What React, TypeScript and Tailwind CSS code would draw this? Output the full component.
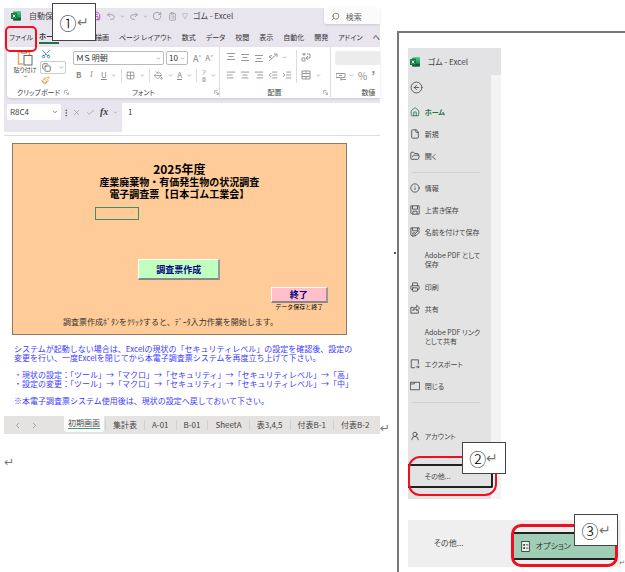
import type { ReactNode } from 'react';
import {
  AlignCenter,
  AlignLeft,
  AlignRight,
  Check,
  ChevronDown,
  ChevronLeft,
  ChevronRight,
  CircleArrowLeft,
  ClipboardList,
  Copy,
  File,
  FolderOpen,
  Grid2x2,
  House,
  Info,
  IndentDecrease,
  IndentIncrease,
  Paintbrush,
  PaintBucket,
  Printer,
  Redo2,
  RotateCw,
  Save,
  Scissors,
  Search,
  Undo2,
  UserRound,
  X,
} from 'lucide-react';

const ribbonTabs = ['描画', 'ページ レイアウト', '数式', 'データ', '校閲', '表示', '自動化', '開発', 'アドイン', 'ヘ'];
const sheets = ['集計表', 'A-01', 'B-01', 'SheetA', '表3,4,5', '付表B-1', '付表B-2'];

const ExcelLogo = () => (
  <svg viewBox="0 0 20 20" className="size-[10px] shrink-0">
    <rect x="4" y="1" width="16" height="18" rx="1.500" fill="#21a366" />
    <path d="M12 1h6.500a1.500 1.500 0 0 1 1.500 1.500V7h-8z" fill="#33c481" />
    <path d="M4 13h16v4.500a1.500 1.500 0 0 1-1.500 1.500h-13A1.500 1.500 0 0 1 4 17.500z" fill="#185c37" />
    <rect x="0" y="4" width="12" height="12" rx="1.200" fill="#107c41" />
    <path d="M3.500 7l5 6M8.500 7l-5 6" stroke="#fff" strokeWidth="1.800" />
  </svg>
);

const PasteIcon = () => (
  <svg viewBox="0 0 16 17" className="h-[17px] w-[16px]" fill="none">
    <path d="M6 15H1.500V3H4M10 3h2.500v3" stroke="#f0a35a" strokeWidth="1.500" />
    <path d="M4.500 4V2H6l1-1 1 1h1.500v2z" stroke="#777" fill="#eee" />
    <rect x="7" y="6.500" width="8" height="9.500" fill="#fff" stroke="#666" />
  </svg>
);

const MenuIcon = ({ d }: { d: string }) => (
  <svg viewBox="0 0 24 24" className="size-[10px]" fill="none" stroke="currentColor" strokeWidth="2">
    <path d={d} />
  </svg>
);

const OptionsIcon = () => (
  <svg viewBox="0 0 16 20" className="h-[11px] w-[9px] shrink-0" fill="none" stroke="#333" strokeWidth="1.500">
    <rect x="1" y="1" width="14" height="18" fill="#e9f2ed" />
    <path d="M9 7h4M9 13h4" />
    <path d="M4 7h3M4 13h3" strokeWidth="3" />
  </svg>
);

const LinesIcon = ({ d }: { d: string }) => (
  <svg viewBox="0 0 10 10" className="size-[10px]" fill="none" stroke="#999">
    <path d={d} />
  </svg>
);

const Launcher = () => (
  <svg viewBox="0 0 8 8" className="size-[5px]" fill="none" stroke="#888">
    <path d="M1 6V1h5M3 3l4 4M7 4v3H4" />
  </svg>
);

const Chevron = () => <ChevronDown className="size-[5px] shrink-0" strokeWidth={3} />;

const Divider = () => <span className="h-[13px] w-px bg-[#dcdcdc]" />;

const ReturnMark = ({ className = '' }: { className?: string }) => (
  <span className={`font-['DejaVu_Sans',sans-serif] text-[#777] ${className}`}>↵</span>
);

const Callout = ({ mark, className }: { mark: string; className: string }) => (
  <div className={`absolute z-10 flex items-center justify-center border border-[#444] bg-white text-[17px] leading-none font-light text-black ${className}`}>
    {mark}
    <ReturnMark className="text-[14px]" />
  </div>
);

const GroupLabel = ({ children, launcher = true }: { children: ReactNode; launcher?: boolean }) => (
  <div className="mt-auto flex h-[10px] items-center text-[7px] leading-none text-[#444]">
    <span className="flex-1 text-center">{children}</span>
    {launcher && <Launcher />}
  </div>
);

const TitleBar = () => (
  <div className="flex h-[16px] items-center pl-[7px] text-[#999]">
    <ExcelLogo />
    <span className="ml-[8px] w-[62px] text-[8px] leading-none text-[#444]">自動保存</span>
    <Save className="size-[10px] text-[#a03cb4]" />
    <div className="ml-[5px] flex items-center gap-[4px]">
      <Undo2 className="size-[10px]" />
      <Chevron />
      <Redo2 className="size-[10px]" />
      <Chevron />
      <RotateCw className="size-[10px]" />
      <ClipboardList className="ml-[2px] size-[9px]" />
      <span className="ml-px text-[6px] leading-none text-[#555]">▽</span>
    </div>
    <span className="ml-[5px] text-[8px] leading-none whitespace-nowrap text-[#444]">ゴム - Excel</span>
    <label className="ml-auto flex h-full w-[56px] items-center gap-[6px] rounded-bl-[2px] bg-[#fbfbfc] pl-[7px] shadow-sm">
      <Search className="size-[9px] shrink-0 -scale-x-100 text-[#666]" />
      <input aria-label="検索" placeholder="検索" className="w-[28px] text-[8px] leading-none outline-none placeholder:text-[#666]" />
    </label>
  </div>
);

const RibbonTabs = () => (
  <nav className="flex h-[23px] items-center pt-[3px] pl-[5px] text-[7px] leading-none whitespace-nowrap text-[#333]">
    <button className="w-[22px] text-left">ファイル</button>
    <button className="ml-[8px] h-[13px] w-[20px] border-b-2 border-[#217346] text-left font-bold">ホーム</button>
    <button className="w-[36px] text-center">挿入</button>
    <div className="flex flex-1 justify-between">
      {ribbonTabs.map((tab) => (
        <button key={tab}>{tab}</button>
      ))}
    </div>
  </nav>
);

const Ribbon = () => (
  <div className="ml-[3px] flex h-[51px] overflow-hidden rounded-l-[4px] bg-white pb-px text-[#888] shadow-sm">
    <div className="flex w-[62px] shrink-0 flex-col pl-[6px]">
      <div className="flex gap-[3px] pt-[2px]">
        <button className="flex w-[24px] flex-col items-center text-[6px] leading-[8px] whitespace-nowrap text-[#444]">
          <PasteIcon />
          貼り付け
          <Chevron />
        </button>
        <div className="flex w-[26px] flex-col gap-[2px]">
          <Scissors className="ml-px size-[10px] -rotate-90 text-[#3b7fb5]" />
          <button aria-label="コピー" className="flex h-[13px] items-center justify-between rounded-[2px] border border-[#ccc] px-px">
            <Copy className="size-[9px] text-[#555]" />
            <Chevron />
          </button>
          <Paintbrush className="ml-px size-[9px] text-[#e08a2c]" />
        </div>
      </div>
      <GroupLabel>クリップボード</GroupLabel>
    </div>
    <div className="ml-[4px] flex w-[146px] shrink-0 flex-col">
      <div className="flex items-center gap-[2px] pt-[4px]">
        <div className="flex h-[14px] w-[91px] items-center rounded-[2px] border border-[#bbb] px-[2px]">
          <select aria-label="フォント" className="min-w-0 flex-1 appearance-none text-[8px] leading-none text-[#333]">
            <option>ＭＳ 明朝</option>
          </select>
          <Chevron />
        </div>
        <div className="flex h-[14px] w-[22px] items-center rounded-[2px] border border-[#bbb] px-[2px]">
          <select aria-label="フォント サイズ" className="min-w-0 flex-1 appearance-none text-[8px] leading-none text-[#333]">
            <option>10</option>
          </select>
          <Chevron />
        </div>
        <span className="ml-[3px] text-[9px] leading-none">A<sup className="text-[5px]">^</sup></span>
        <span className="ml-[2px] text-[8px] leading-none">A<sup className="text-[5px]">ˇ</sup></span>
      </div>
      <div className="mt-[3px] flex h-[14px] items-center justify-between pr-[3px] pl-[3px] text-[8px] leading-none">
        <button className="font-bold">B</button>
        <button className="px-[4px] font-['Liberation_Serif',serif] italic">I</button>
        <button className="underline">U</button>
        <Chevron />
        <Divider />
        <Grid2x2 className="size-[9px]" />
        <Chevron />
        <Divider />
        <PaintBucket className="size-[9px]" />
        <Chevron />
        <button className="border-b border-[#888]">A</button>
        <Chevron />
        <Divider />
        <button className="text-[5px] leading-[7px]">ア<br />亜</button>
        <Chevron />
      </div>
      <GroupLabel>フォント</GroupLabel>
    </div>
    <span className="mr-[6px] h-full w-px shrink-0 bg-[#ddd]" />
    <div className="flex w-[102px] shrink-0 flex-col">
      <div className="flex flex-1">
        <div className="flex w-[70px] flex-col gap-[8px] pt-[5px]">
          <div className="flex items-center gap-[4px]">
            <LinesIcon d="M1 1.500h8M2.500 4.500h5M1 7.500h8" />
            <LinesIcon d="M1 2.500h8M2.500 5.500h5M1 8.500h8" />
            <LinesIcon d="M1 3.500h8M2.500 6.500h5M1 9.500h8" />
            <LinesIcon d="M1 9l8-7M6 2h3v3M1 4l3 3M2 6a1 1 0 1 1 2-2" />
            <Chevron />
          </div>
          <div className="flex items-center gap-[4px]">
            <AlignLeft className="size-[10px]" />
            <AlignCenter className="size-[10px]" />
            <AlignRight className="size-[10px]" />
            <IndentDecrease className="size-[10px]" />
            <IndentIncrease className="size-[10px]" />
          </div>
        </div>
        <span className="mt-[3px] h-[33px] w-px bg-[#ddd]" />
        <div className="flex flex-col gap-[8px] pt-[5px] pl-[4px]">
          <LinesIcon d="M1 2h4M3 1v3M6 2h3v4H6M1 6h3v3H1zM7 8l-2-2 2-2" />
          <div className="flex items-center gap-[5px]">
            <LinesIcon d="M1 1h8v8H1zM1 3.500h8M1 6.500h8M5 1v2.500M5 6.500V9" />
            <Chevron />
          </div>
        </div>
      </div>
      <GroupLabel>配置</GroupLabel>
    </div>
    <span className="mr-[4px] ml-[2px] h-full w-px shrink-0 bg-[#ddd]" />
    <div className="flex min-w-0 flex-1 flex-col pt-[4px]">
      <select aria-label="表示形式" className="h-[14px] w-full appearance-none rounded-l-[3px] bg-[#ececec]" />
      <div className="mt-[4px] flex h-[13px] items-center gap-[3px] pl-px leading-none">
        <LinesIcon d="M0 2.500h9v4H0zM3 4.500h3M5 8.500h5M5 6.500v3" />
        <Chevron />
        <span className="ml-px text-[10px]">%</span>
        <span className="ml-px text-[12px] font-bold">’</span>
      </div>
      <div className="mt-auto flex flex-col pl-[22px]">
        <GroupLabel launcher={false}>数値</GroupLabel>
      </div>
    </div>
  </div>
);

const FormulaBar = () => (
  <div className="mt-[5px] flex h-[29px] items-start pl-[3px] text-[#999]">
    <div className="mt-px flex h-[16px] w-[54px] items-center rounded-[2px] bg-white px-[3px]">
      <select aria-label="名前ボックス" className="min-w-0 flex-1 appearance-none text-[8px] leading-none text-[#444]">
        <option>R8C4</option>
      </select>
      <ChevronDown className="size-[6px] text-[#555]" strokeWidth={3} />
    </div>
    <div className="mt-px flex h-[16px] w-[61px] items-center gap-[5px] pl-[4px]">
      <span className="text-[9px] leading-none font-bold text-[#555]">⁝</span>
      <X className="size-[9px]" />
      <Check className="size-[9px]" />
      <span className="font-['Liberation_Serif',serif] text-[10px] leading-none font-bold text-[#444] italic">fx</span>
      <Chevron />
    </div>
    <input aria-label="数式バー" defaultValue="1" className="h-full min-w-0 flex-1 bg-white pb-[12px] pl-[6px] text-[8px] text-[#444] outline-none" />
  </div>
);

const bevel = 'border-t border-l border-r-2 border-b-2 border-t-white border-l-white border-r-[#999] border-b-[#888] font-bold text-[#000080]';

const StartForm = () => (
  <div className="mt-[7px] mr-[33px] ml-[8px] flex flex-col border border-[#8c7a66] bg-[#ffcc99] pb-[6px] text-black">
    <h1 className="pt-[19px] text-center text-[10px] leading-[12px] font-bold whitespace-nowrap">
      <span className="text-[12px]">2025年度</span>
      <br />
      産業廃棄物・有価発生物の状況調査
      <br />
      電子調査票【日本ゴム工業会】
    </h1>
    <div className="mt-[7px] ml-[82px] h-[13px] w-[44px] border border-[#3f8f5f]" />
    <button className={`mt-[39px] h-[21px] w-[82px] self-center bg-[#c0ffc0] text-[9px] leading-none ${bevel}`}>調査票作成</button>
    <div className="mt-[7px] mr-[18px] flex w-[57px] flex-col items-center self-end">
      <button className={`h-[16px] w-full bg-[#ffc0cb] text-[9px] leading-none ${bevel}`}>終了</button>
      <span className="text-[6px] leading-[8px] whitespace-nowrap">データ保存と終了</span>
    </div>
    <p className="mt-[5px] pl-[50px] text-[8px] leading-[12px] whitespace-nowrap text-[#333]">
      調査票作成ﾎﾞﾀﾝをｸﾘｯｸすると、ﾃﾞｰﾀ入力作業を開始します。
    </p>
  </div>
);

const Notes = () => (
  <div className="mt-[9px] ml-[10px] text-[8px] leading-[9px] whitespace-nowrap text-[#3c3cff]">
    <p>
      システムが起動しない場合は、Excelの現状の「セキュリティレベル」の設定を確認後、設定の
      <br />
      変更を行い、一度Excelを閉じてから本電子調査票システムを再度立ち上げて下さい。
    </p>
    <ul className="my-[8px]">
      <li>・現状の設定：「ツール」→「マクロ」→「セキュリティ」→「セキュリティレベル」→「高」</li>
      <li>・設定の変更：「ツール」→「マクロ」→「セキュリティ」→「セキュリティレベル」→「中」</li>
    </ul>
    <p>※本電子調査票システム使用後は、現状の設定へ戻しておいて下さい。</p>
  </div>
);

const SheetTabs = () => (
  <div className="mt-[11px] flex h-[18px] items-center overflow-hidden bg-[#e5e3e1] text-[8px] leading-none whitespace-nowrap text-[#444]">
    <ChevronLeft className="ml-[9px] size-[9px] shrink-0 text-[#888]" />
    <ChevronRight className="ml-[8px] size-[9px] shrink-0 text-[#888]" />
    <button className="mr-px ml-[25px] h-[16px] shrink-0 self-start rounded-b-[3px] bg-white px-[4px]">
      <span className="block border-b border-[#3f9b6b] pb-px">初期画面</span>
    </button>
    {sheets.map((name) => (
      <button key={name} className="border-l border-[#d4d2d0] px-[7px] py-px">
        {name}
      </button>
    ))}
  </div>
);

const MenuItem = ({ icon, children, tall = false, active = false }: { icon?: ReactNode; children: ReactNode; tall?: boolean; active?: boolean }) => (
  <li>
    <button
      className={`flex w-full items-center text-left text-[7px] leading-[9px] whitespace-nowrap ${tall ? 'h-[33px]' : 'h-[22px]'} ${
        active ? 'font-bold text-[#217346]' : 'text-[#444]'
      }`}
    >
      <span className="flex w-[15px] shrink-0">{icon}</span>
      <span>{children}</span>
    </button>
  </li>
);

const Backstage = () => (
  <div className="relative mt-[15px] ml-[9px] w-[93px] bg-[#f4f4f5]">
    <div className="flex h-[27px] items-center gap-[8px] bg-[#e3e3e6] pl-[2px] text-[8px] leading-none whitespace-nowrap text-[#444]">
      <ExcelLogo />
      ゴム - Excel
    </div>
    <div className="mr-[10px] bg-[#e4e3e3] pt-[6px] pb-[11px] pl-[2px]">
      <button aria-label="戻る" className="block text-[#444]">
        <CircleArrowLeft className="size-[13px]" strokeWidth={1.5} />
      </button>
      <ul className="mt-[7px]">
        <MenuItem active icon={<House className="size-[10px]" />}>ホーム</MenuItem>
        <MenuItem icon={<File className="size-[10px]" />}>新規</MenuItem>
        <MenuItem icon={<FolderOpen className="size-[10px]" />}>開く</MenuItem>
      </ul>
      <hr className="mt-[5px] mr-[11px] mb-[4px] ml-[2px] border-[#cfd2d2]" />
      <ul>
        <MenuItem icon={<Info className="size-[10px]" />}>情報</MenuItem>
        <MenuItem icon={<MenuIcon d="M2 2h20v20H5l-3-3zM6 2v8h12V2M7 22v-7h10v7" />}>上書き保存</MenuItem>
        <MenuItem icon={<MenuIcon d="M22 8V2H2v17l3 3h4M6 2v7h12V2M7 22v-8h6M11 22l1-5 8-8 3 3-8 8z" />}>名前を付けて保存</MenuItem>
        <MenuItem tall>
          Adobe PDF として
          <br />
          保存
        </MenuItem>
        <MenuItem icon={<Printer className="size-[10px]" />}>印刷</MenuItem>
        <MenuItem icon={<MenuIcon d="M9 8H2v14h18v-7M7 16c1-6 4-8 9-8V3l7 7-7 6v-4c-4 0-7 1-9 4z" />}>共有</MenuItem>
        <MenuItem tall>
          Adobe PDF リンク
          <br />
          として共有
        </MenuItem>
        <MenuItem icon={<MenuIcon d="M20 13V2H3v19h9M14 19h8M19 16l3 3-3 3" />}>エクスポート</MenuItem>
        <MenuItem icon={<MenuIcon d="M1 3h22v18H1zM1 7h9l2-4" />}>閉じる</MenuItem>
      </ul>
      <hr className="mt-[5px] mr-[11px] mb-[22px] ml-[2px] border-[#cfd2d2]" />
      <ul>
        <MenuItem icon={<UserRound className="size-[10px]" />}>アカウント</MenuItem>
      </ul>
      <button className="mt-[17px] -ml-[2px] h-[24px] w-[85px] rounded-r-[2px] border-y-2 border-r-2 border-[#222] pl-[17px] text-left text-[7px] leading-none text-[#444]">
        その他...
      </button>
    </div>
    <div className="absolute bottom-[3px] left-0 h-[40px] w-[89px] rounded-[12px] border-2 border-[#f00f1e]" />
    <Callout mark="②" className="bottom-[25px] left-[54px] h-[32px] w-[44px]" />
  </div>
);

const OptionsPanel = () => (
  <div className="relative mt-[21px] mr-[4px] ml-[9px] flex h-[47px] bg-[#efefef]">
    <button className="w-[104px] shrink-0 pb-[2px] pl-[26px] text-left text-[8px] text-[#444]">その他...</button>
    <button className="mt-[12px] mr-[4px] flex h-[28px] min-w-0 flex-1 items-center gap-[6px] border-y-2 border-[#222] bg-[#a0cdb5] pl-[9px] text-[8px] whitespace-nowrap text-[#333]">
      <OptionsIcon />
      オプション
    </button>
    <div className="absolute top-[4px] right-[3px] left-[103px] h-[43px] rounded-[10px] border-[3px] border-[#f00f1e]" />
    <Callout mark="③" className="-top-[6px] right-[3px] h-[32px] w-[44px]" />
    <ReturnMark className="absolute -right-[4px] bottom-0 text-[7px] leading-none" />
  </div>
);

const App = () => (
  <div className="flex min-h-screen overflow-hidden bg-white font-['Noto_Sans_CJK_JP',sans-serif] [font-feature-settings:'palt']">
    <section className="w-[63%] shrink-0 pt-2 pl-1">
      <div className="flex items-end">
        <div className="relative min-w-0 flex-1">
          <div className="bg-[#e9e5ee]">
            <TitleBar />
            <RibbonTabs />
            <Ribbon />
            <FormulaBar />
          </div>
          <div className="mt-[3px] border-t border-[#ddd] [font-feature-settings:normal]">
            <StartForm />
            <Notes />
          </div>
          <SheetTabs />
          <div className="absolute top-[18px] left-px h-[26px] w-[32px] rounded-[5px] border-2 border-[#f00f1e]" />
          <Callout mark="①" className="-top-[5px] left-[48px] h-[38px] w-[44px]" />
        </div>
        <ReturnMark className="w-[14px] text-[12px] leading-[12px]" />
      </div>
      <ReturnMark className="mt-[22px] block text-[12px] leading-[12px]" />
    </section>
    <span className="mt-[252px] size-[2px] shrink-0 bg-[#555]" />
    <section className="mt-[31px] ml-px min-w-0 flex-1 border-t-2 border-l-2 border-[#777]">
      <Backstage />
      <OptionsPanel />
    </section>
  </div>
);

export default App;
